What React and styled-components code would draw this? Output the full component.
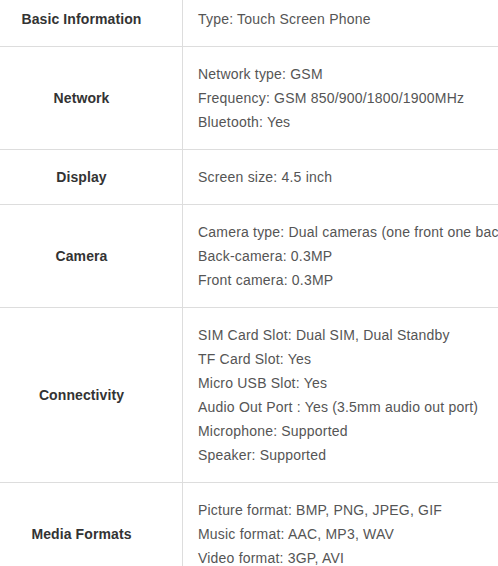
import React from "react";
import styled, { createGlobalStyle } from "styled-components";

const GlobalStyle = createGlobalStyle`
  html, body {
    margin: 0;
    padding: 0;
    background: #ffffff;
    overflow: hidden;
  }
`;

const SpecTable = styled.div`
  width: 640px;
  margin: -8px 0 0 -19px;
  font-family: "Liberation Sans", Arial, sans-serif;
  font-size: 14px;
  line-height: 24px;
`;

const Row = styled.div`
  display: grid;
  grid-template-columns: 202px 1fr;
  border-bottom: 1px solid #dddddd;
`;

const Label = styled.div`
  display: flex;
  align-items: center;
  justify-content: center;
  border-right: 1px solid #dddddd;
  font-weight: bold;
  letter-spacing: 0.1px;
  color: #333333;
`;

const Values = styled.div`
  padding: 15px 15px;
  color: #555555;
  letter-spacing: 0.2px;
  white-space: nowrap;
`;

const Line = styled.div`
  height: 24px;
`;

const specs = [
  { label: "Basic Information", lines: ["Type: Touch Screen Phone"] },
  {
    label: "Network",
    lines: [
      "Network type: GSM",
      "Frequency: GSM 850/900/1800/1900MHz",
      "Bluetooth: Yes",
    ],
  },
  { label: "Display", lines: ["Screen size: 4.5 inch"] },
  {
    label: "Camera",
    lines: [
      "Camera type: Dual cameras (one front one back)",
      "Back-camera: 0.3MP",
      "Front camera: 0.3MP",
    ],
  },
  {
    label: "Connectivity",
    lines: [
      "SIM Card Slot: Dual SIM, Dual Standby",
      "TF Card Slot: Yes",
      "Micro USB Slot: Yes",
      "Audio Out Port : Yes (3.5mm audio out port)",
      "Microphone: Supported",
      "Speaker: Supported",
    ],
  },
  {
    label: "Media Formats",
    lines: [
      "Picture format: BMP, PNG, JPEG, GIF",
      "Music format: AAC, MP3, WAV",
      "Video format: 3GP, AVI",
    ],
  },
];

function App() {
  return (
    <>
      <GlobalStyle />
      <SpecTable>
        {specs.map((spec) => (
          <Row key={spec.label}>
            <Label>{spec.label}</Label>
            <Values>
              {spec.lines.map((line) => (
                <Line key={line}>{line}</Line>
              ))}
            </Values>
          </Row>
        ))}
      </SpecTable>
    </>
  );
}

export default App;
